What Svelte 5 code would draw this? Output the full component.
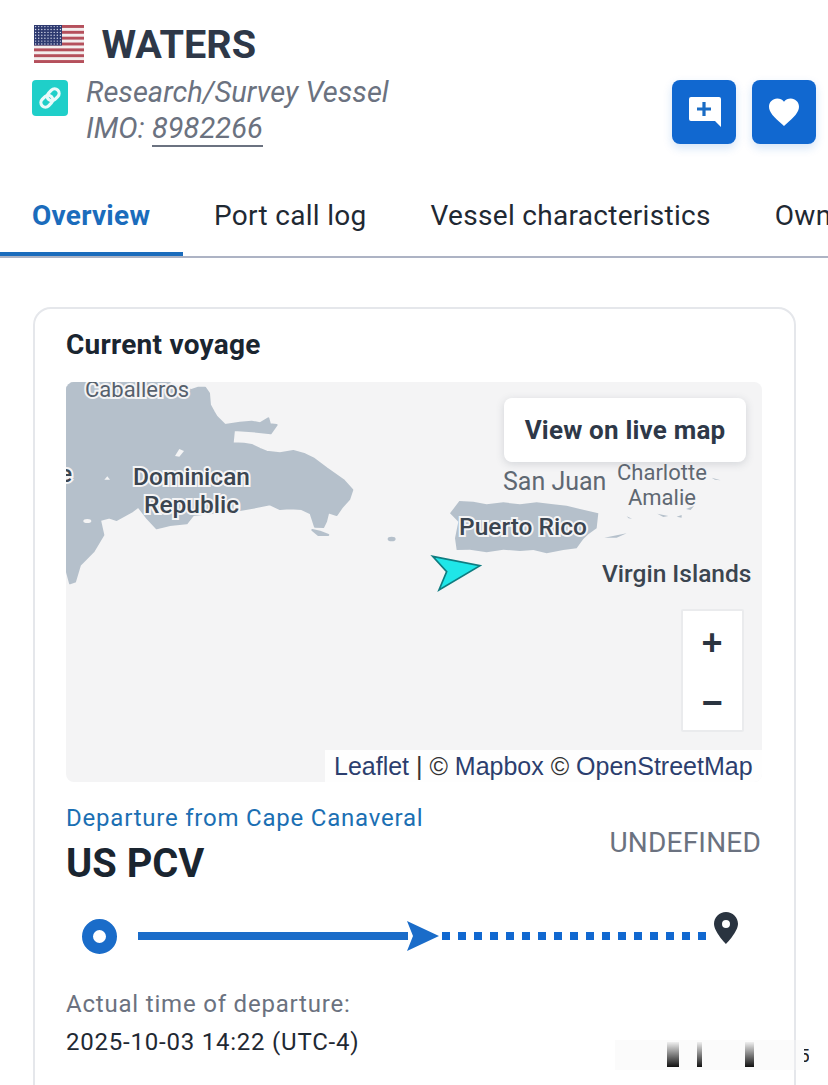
<script>
  const stripes = [0, 2, 4, 6, 8, 10, 12];
  const stars = [];
  for (let r = 0; r < 7; r++) for (let c = 0; c < 9; c++) stars.push({ x: 1.6 + c * 3.1, y: 1.6 + r * 2.9 });
  const dots = Array.from({ length: 17 }, (_, i) => i);
  const tabs = ['Overview', 'Port call log', 'Vessel characteristics', 'Ownership'];
</script>

<div class="page">
  <header class="head">
    <div class="info">
      <div class="title-row">
        <svg class="flag" viewBox="0 0 50 38" aria-hidden="true">
          <rect width="50" height="38" fill="#f3eeee" />
          {#each stripes as s}
            <rect y={s * 2.923} width="50" height="2.923" fill="#b5505c" />
          {/each}
          <rect width="28" height="20.5" fill="#2e3a70" />
          {#each stars as st}
            <circle cx={st.x} cy={st.y} r="0.7" fill="#d8dcec" />
          {/each}
        </svg>
        <h1>WATERS</h1>
      </div>
      <div class="sub-row">
        <span class="badge">
          <svg viewBox="0 0 36 36" width="36" height="36" aria-hidden="true">
            <g transform="rotate(-45 18 18)" fill="none" stroke="#eafafa" stroke-width="3.2">
              <rect x="7" y="13.5" width="13" height="9" rx="4.5" />
              <rect x="16" y="13.5" width="13" height="9" rx="4.5" />
            </g>
          </svg>
        </span>
        <div class="sub-text">
          <div class="type">Research/Survey Vessel</div>
          <div class="imo">IMO: <span class="imo-no">8982266</span></div>
        </div>
      </div>
    </div>
    <div class="actions">
      <button class="act" aria-label="Add note">
        <svg viewBox="0 0 64 64" width="64" height="64" aria-hidden="true">
          <path d="M19 17h28a2 2 0 0 1 2 2v28l-6-6H19a2 2 0 0 1-2-2V19a2 2 0 0 1 2-2z" fill="#fff" />
          <path d="M32 22v14M25 29h14" stroke="#1a6cc4" stroke-width="3.2" fill="none" />
        </svg>
      </button>
      <button class="act" aria-label="Favourite">
        <svg viewBox="0 0 24 24" width="36" height="36" aria-hidden="true">
          <path d="M12 21.3l-1.45-1.32C5.4 15.36 2 12.28 2 8.5 2 5.42 4.42 3 7.5 3c1.74 0 3.41.81 4.5 2.09C13.09 3.81 14.76 3 16.5 3 19.58 3 22 5.42 22 8.5c0 3.78-3.4 6.86-8.55 11.54L12 21.3z" fill="#fff" />
        </svg>
      </button>
    </div>
  </header>

  <nav class="tabs">
    {#each tabs as t, i}
      <span class="tab" class:active={i === 0}>{t}</span>
    {/each}
  </nav>

  <section class="card">
    <h2>Current voyage</h2>
    <div class="map">
      <svg class="land" viewBox="0 0 696 400" aria-hidden="true">
        <g transform="translate(-6 -7) scale(0.3333)" fill="#b5c0cb" stroke="#b5c0cb" stroke-width="6" stroke-linejoin="round">
          <path d="M18 20 L320 20 L360 40 L395 45 L415 38 L435 38 L447 55 L450 90 L462 112 L470 125 L495 150 L540 143 L575 140 L600 145 L625 130 L630 148 L650 150 L632 175 L590 170 L522 165 L518 205 L552 206 L575 210 L600 222 L620 230 L660 235 L700 228 L735 238 L760 250 L800 280 L850 315 L877 345 L868 372 L845 398 L830 420 L805 412 L798 440 L790 456 L765 455 L752 415 L725 402 L690 400 L660 402 L630 388 L570 400 L540 405 L400 420 L380 445 L330 450 L290 460 L262 430 L235 395 L215 410 L170 435 L148 428 L120 435 L130 480 L100 530 L60 570 L45 620 L30 625 L18 580 Z" />
          <path d="M757 465 L780 470 L805 480 L775 480 Z" />
          <ellipse cx="995" cy="492" rx="9" ry="4" />
          <ellipse cx="82" cy="438" rx="12" ry="6" fill="#f4f4f5" stroke="none" />
          <path d="M345 243 L358 222 L372 228 L358 245 Z" fill="#f4f4f5" stroke="none" />
          <path d="M133 314 L142 304 L150 314 Z" fill="#f4f4f5" stroke="none" />
        </g>
        <g transform="translate(354 -7) scale(0.3333)" fill="#b5c0cb">
          <path d="M118 378 L160 380 L200 388 L250 382 L300 388 L350 382 L400 388 L440 392 L480 402 L535 415 L530 460 L505 478 L490 492 L470 520 L430 525 L380 535 L340 525 L300 528 L250 524 L200 532 L150 524 L110 525 L105 490 L115 440 L90 415 Z" />
          <path d="M553 488 L620 475 L590 488 Z" />
          <path d="M712 416 L745 423 L730 426 Z" />
          <path d="M770 425 L785 420 L785 428 Z" />
          <path d="M798 402 L822 393 L812 405 Z" />
          <path d="M620 424 L636 431 L626 430 Z" />
          <path d="M875 308 L902 316 L885 314 Z" />
          <path d="M38 544 L180 572 L57 645 L80 590 Z" fill="#1fe6e8" stroke="#0f7c80" stroke-width="5" stroke-linejoin="miter" />
        </g>
      </svg>

      <span class="lbl halo small caballeros">Caballeros</span>
      <span class="lbl halo edge">e</span>
      <span class="lbl halo dr">Dominican<br />Republic</span>
      <span class="lbl halo pr">Puerto Rico</span>
      <span class="lbl plain sj">San Juan</span>
      <span class="lbl plain ca">Charlotte<br />Amalie</span>
      <span class="lbl halo vi">Virgin Islands</span>

      <button class="live">View on live map</button>

      <div class="zoom">
        <span class="z">+</span>
        <span class="z">−</span>
      </div>

      <div class="attr"><span class="ln">Leaflet</span> | © <span class="ln">Mapbox</span> © <span class="ln">OpenStreetMap</span></div>
    </div>

    <div class="ports">
      <div>
        <div class="dep">Departure from Cape Canaveral</div>
        <div class="code">US PCV</div>
      </div>
      <div class="undef">UNDEFINED</div>
    </div>

    <div class="route">
      <span class="origin"></span>
      <span class="solid"></span>
      <svg class="head-arrow" viewBox="0 0 32 30" width="32" height="30" aria-hidden="true">
        <path d="M0 0 L32 15 L0 30 L6 15 Z" fill="#1a6cc9" />
      </svg>
      <span class="dots">
        {#each dots as d}
          <i></i>
        {/each}
      </span>
      <svg class="pin" viewBox="0 0 24 32" width="24" height="32" aria-hidden="true">
        <path fill-rule="evenodd" d="M12 0C5.4 0 0 5.2 0 11.8 0 20 12 32 12 32s12-12 12-20.2C24 5.2 18.600 0 12 0zm0 8a4 4 0 1 1 0 8 4 4 0 0 1 0-8z" fill="#2a3440" />
      </svg>
    </div>

    <div class="atd-label">Actual time of departure:</div>
    <div class="atd">2025-10-03 14:22 (UTC-4)</div>
  </section>

  <div class="smudge" aria-hidden="true"><i></i><i></i><i></i><span class="frag">5</span></div>
</div>

<style>
  :global(body) { margin: 0; background: #fff; }
  .page {
    position: relative;
    width: 828px;
    height: 1085px;
    overflow: hidden;
    font-family: Roboto, "Liberation Sans", sans-serif;
    background: #fff;
  }
  .head {
    display: flex;
    justify-content: space-between;
    padding: 16px 12px 0 32px;
    height: 164px;
    box-sizing: border-box;
  }
  .title-row { display: flex; align-items: center; height: 56px; padding-left: 2px; gap: 17.5px; }
  .flag { width: 50px; height: 38px; }
  h1 { margin: 2px 0 0; font-size: 39.6px; font-weight: 700; color: #2e3848; line-height: 58px; }
  .sub-row { display: flex; margin-top: 8px; gap: 18px; }
  .badge { width: 36px; height: 36px; background: #1fcfc9; border-radius: 4px; flex: none; }
  .badge svg { display: block; }
  .sub-text { width: 304px; height: 76px; margin-top: -6px; overflow: hidden; font-style: italic; color: #6b7280; font-size: 29px; line-height: 36px; letter-spacing: 0.05px; }
  .type { white-space: nowrap; }
  .imo-no { display: inline-block; line-height: 33px; border-bottom: 2px solid #6b7280; }
  .actions { display: flex; gap: 16px; padding-top: 64px; }
  .act {
    width: 64px; height: 64px; padding: 0; border: 0; border-radius: 8px;
    background: #1168d0;
    display: flex; align-items: center; justify-content: center;
    box-shadow: 0 4px 10px rgba(17, 104, 208, 0.18);
  }
  .act svg { display: block; }
  .tabs {
    display: flex;
    height: 94px;
    box-sizing: border-box;
    border-bottom: 2px solid #adb3c4;
    overflow: hidden;
    white-space: nowrap;
  }
  .tab {
    flex: none;
    padding: 0 32px;
    height: 92px;
    line-height: 104px;
    font-size: 28px;
    letter-spacing: 0.3px;
    color: #1f2933;
    box-sizing: border-box;
  }
  .tab.active { width: 183px; margin-right: -1px; color: #1b6cbc; font-weight: 700; letter-spacing: 0.25px; border-bottom: 4px solid #1b6cbc; }
  .card {
    margin: 49px 32px 0 33px;
    border: 2px solid #e5e7eb;
    border-radius: 18px;
    padding: 19px 32px 40px 31px;
    height: 900px;
    box-sizing: border-box;
  }
  h2 { margin: 0; font-size: 28px; font-weight: 700; letter-spacing: 0.25px; color: #1a2530; line-height: 34px; }
  .map {
    position: relative;
    margin-top: 20px;
    height: 400px;
    background: #f4f4f5;
    border-radius: 8px;
    overflow: hidden;
  }
  .land { position: absolute; inset: 0; width: 100%; height: 100%; }
  .lbl { position: absolute; white-space: nowrap; font-family: Roboto, sans-serif; text-align: center; line-height: 28px; }
  .halo { color: #3b4550; font-size: 24.5px; font-weight: 500; -webkit-text-stroke: 4px #f4f4f5; paint-order: stroke fill; }
  .plain { color: #5f6872; font-size: 25px; }
  .small { color: #56606c; font-size: 22px; font-weight: 400; }
  .caballeros { left: 19px; top: -6px; }
  .edge { left: -7px; top: 78px; }
  .dr { left: 67px; top: 81px; }
  .pr { left: 393px; top: 131px; }
  .sj { left: 437px; top: 86px; }
  .ca { left: 551px; top: 78px; font-size: 22px; line-height: 25px; }
  .vi { left: 536px; top: 178px; }
  .live {
    position: absolute; left: 438px; top: 16px; width: 242px; height: 64px;
    border: 0; border-radius: 8px; background: #fff;
    box-shadow: 0 2px 8px rgba(60, 70, 90, 0.18);
    font-family: Roboto, sans-serif; font-size: 26px; font-weight: 700; letter-spacing: 0.2px;
    color: #2e3848; padding: 0;
  }
  .zoom {
    position: absolute; left: 614.5px; top: 226.5px; width: 63px; height: 123px;
    box-sizing: border-box; background: #fff; border: 2px solid #eaebed; border-radius: 2px;
    display: flex; flex-direction: column;
  }
  .z { height: 60px; text-align: center; font: 700 36px/64px "Liberation Sans", sans-serif; color: #2a3440; }
  .attr {
    position: absolute; right: 0; bottom: 0; height: 32px; width: 437px; box-sizing: border-box;
    padding-left: 9px; background: rgba(255,255,255,0.9);
    font: 25px/32px "Liberation Sans", Arial, sans-serif; color: #333; white-space: nowrap;
  }
  .ln { color: #2c3e6e; }
  .ports { display: flex; justify-content: space-between; margin-top: 20px; }
  .dep { font-size: 24px; color: #1b6fb3; letter-spacing: 0.78px; line-height: 32px; }
  .code { font-size: 39.8px; font-weight: 700; color: #1a2530; line-height: 44px; margin-top: 8px; }
  .undef { font-size: 28px; letter-spacing: 0.2px; color: #6b7280; line-height: 32px; margin-top: 25px; margin-right: 1px; }
  .route { position: relative; display: flex; align-items: center; height: 44px; margin-top: 28px; padding-left: 16px; }
  .origin { width: 13px; height: 13px; border: 11px solid #1a6cc9; border-radius: 50%; background: #fff; flex: none; }
  .solid { width: 270px; height: 8px; background: #1a6cc9; margin-left: 21px; flex: none; }
  .head-arrow { flex: none; margin-left: -1px; }
  .dots { display: flex; gap: 8px; margin-left: 3px; flex: none; }
  .dots i { width: 8px; height: 8px; background: #1168d0; display: block; }
  .pin { flex: none; margin-left: 8px; margin-top: -16px; }
  .atd-label { font-size: 24px; color: #6b7280; letter-spacing: 0.8px; line-height: 32px; margin-top: 30px; }
  .atd { font-size: 24px; color: #1f2933; letter-spacing: 0.78px; line-height: 32px; margin-top: 6px; }
  .smudge { position: absolute; left: 615px; top: 1040px; width: 195px; height: 30px; background: rgba(245,245,245,0.4); }
  .smudge i { position: absolute; top: 2px; height: 25px; background: linear-gradient(rgba(20,20,20,0.05), #111); }
  .smudge i:nth-child(1) { left: 52px; width: 12px; }
  .smudge i:nth-child(2) { left: 82px; width: 5px; }
  .smudge i:nth-child(3) { left: 130px; width: 9px; }
  .frag { position: absolute; left: 189px; top: 5px; width: 5px; overflow: hidden; text-indent: -5px; font-size: 19px; line-height: 22px; color: #222; }
</style>
